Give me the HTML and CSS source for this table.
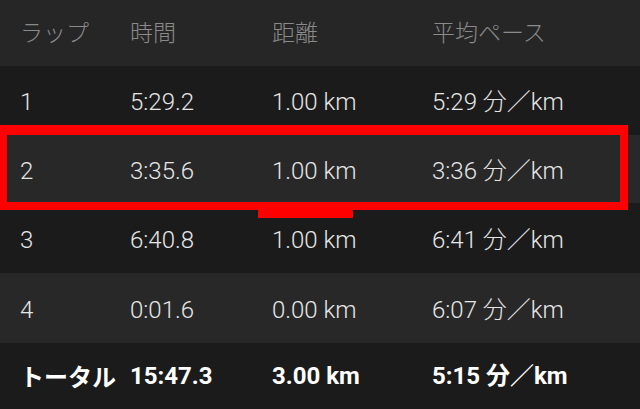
FILE: index.html
```html
<!DOCTYPE html>
<html lang="ja">
<head>
<meta charset="utf-8">
<link rel="stylesheet" href="styles.css">
</head>
<body>
<div class="table">
  <div class="row head">
    <div>ラップ</div><div>時間</div><div>距離</div><div>平均ペース</div>
  </div>
  <div class="row dark r1">
    <div>1</div><div>5:29.2</div><div>1.00 km</div><div>5:29 <span class="cjk">分</span>／km</div>
  </div>
  <div class="row light r2">
    <div>2</div><div>3:35.6</div><div>1.00 km</div><div>3:36 <span class="cjk">分</span>／km</div>
  </div>
  <div class="row dark r3">
    <div>3</div><div>6:40.8</div><div>1.00 km</div><div>6:41 <span class="cjk">分</span>／km</div>
  </div>
  <div class="row light r4">
    <div>4</div><div>0:01.6</div><div>0.00 km</div><div>6:07 <span class="cjk">分</span>／km</div>
  </div>
  <div class="row dark total">
    <div>トータル</div><div>15:47.3</div><div>3.00 km</div><div>5:15 <span class="cjk">分</span>／km</div>
  </div>
  <div class="mark"></div>
</div>
</body>
</html>
```

FILE: styles.css
```css
html, body {
  margin: 0;
  padding: 0;
  background: #1b1b1b;
}
.table {
  position: relative;
  width: 640px;
  height: 409px;
  overflow: hidden;
  font-family: Roboto, "Noto Sans CJK JP", sans-serif;
}
.row {
  display: grid;
  grid-template-columns: 110px 142px 160px 1fr;
  align-items: center;
  padding-left: 20px;
  color: #e6e6e6;
  font-size: 24px;
  font-weight: 300;
  line-height: 28px;
  white-space: nowrap;
}
.row > div {
  height: 28px;
}
.r1 > div, .r2 > div, .r3 > div, .r4 > div {
  margin-top: 3px;
}
.head {
  height: 66px;
  background: #262626;
  color: #8a8a8a;
  font-family: "Noto Sans CJK JP", sans-serif;
  font-size: 23px;
  font-weight: 300;
}
.head > div {
  margin-top: -5px;
}
.dark { background: #1b1b1b; }
.light { background: #282828; }
.r1 { height: 69px; }
.r2 { height: 68px; }
.r3 { height: 70px; }
.r4 { height: 70px; }
.total {
  height: 66px;
  color: #ffffff;
  font-weight: 700;
}
.total > div:first-child {
  font-family: "Noto Sans CJK JP", sans-serif;
  font-weight: 700;
}
.cjk {
  font-family: "Noto Sans CJK JP", sans-serif;
  line-height: 1;
}
.mark {
  position: absolute;
  left: 0;
  top: 125px;
  width: 613px;
  height: 67px;
  border-style: solid;
  border-color: #ff0000;
  border-width: 10px 8px 8px 7px;
}
.mark::after {
  content: "";
  position: absolute;
  left: 251px;
  top: 75px;
  width: 95px;
  height: 8px;
  background: #ff0000;
}
```
